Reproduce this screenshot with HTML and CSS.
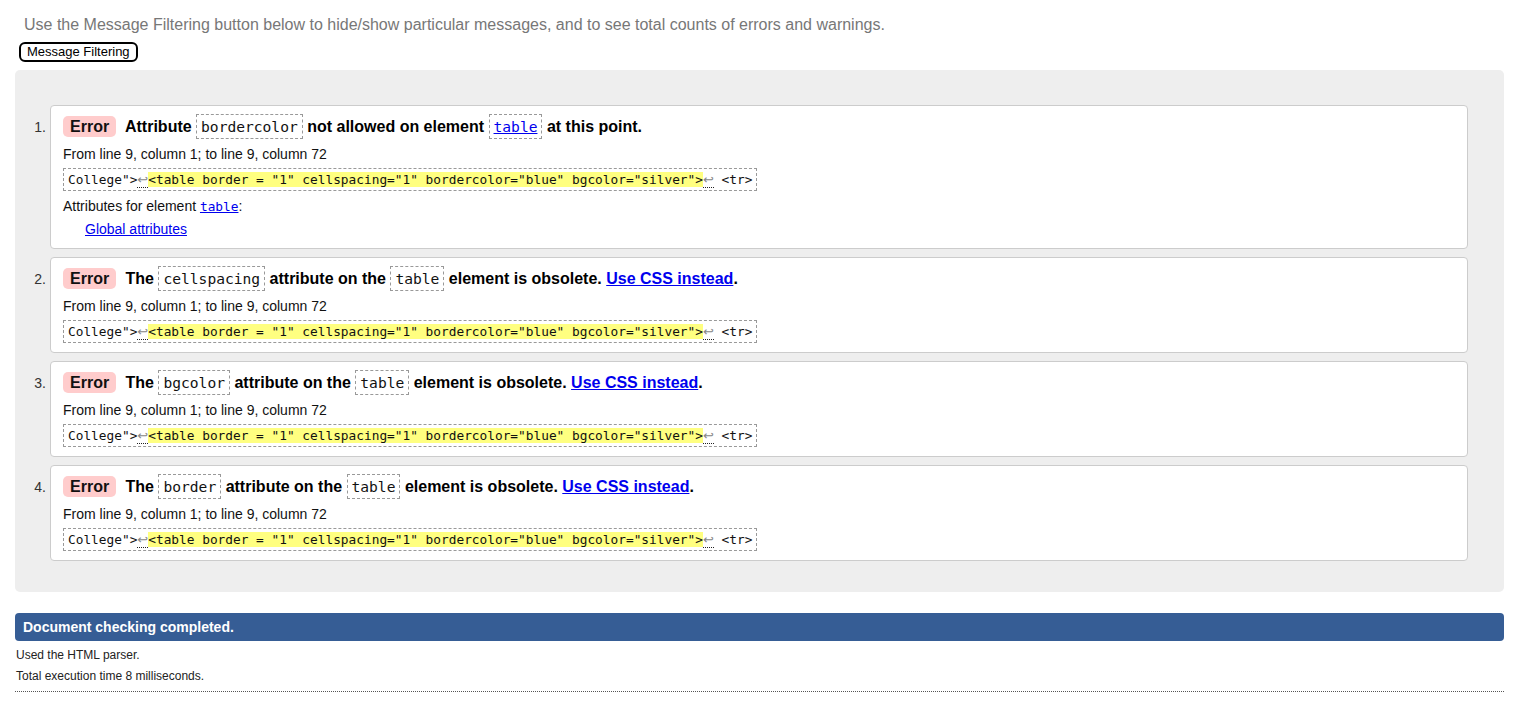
FILE: index.html
```html
<!DOCTYPE html>
<html lang="en">
<head>
<meta charset="utf-8">
<title>Nu Html Checker</title>
<link rel="stylesheet" href="styles.css">
</head>
<body>
<p class="intro">Use the Message Filtering button below to hide/show particular messages, and to see total counts of errors and warnings.</p>
<button class="filter-btn" type="button">Message Filtering</button>
<div class="results">
  <ol class="messages">
    <li class="item">
      <span class="num">1.</span>
      <div class="card">
        <p class="title"><strong class="badge">Error</strong> Attribute <code class="ic">bordercolor</code> not allowed on element <code class="ic"><a href="#">table</a></code> at this point.</p>
        <p class="loc">From line 9, column 1; to line 9, column 72</p>
        <div class="extract"><code>College"&gt;<span class="lf">↩</span><span class="hl">&lt;table border = "1" cellspacing="1" bordercolor="blue" bgcolor="silver"&gt;</span><span class="lf">↩</span> &lt;tr&gt;</code></div>
        <p class="attrs">Attributes for element <a class="mono" href="#">table</a>:</p>
        <p class="global"><a href="#">Global attributes</a></p>
      </div>
    </li>
    <li class="item">
      <span class="num">2.</span>
      <div class="card">
        <p class="title"><strong class="badge">Error</strong> The <code class="ic">cellspacing</code> attribute on the <code class="ic">table</code> element is obsolete. <a href="#">Use CSS instead</a>.</p>
        <p class="loc">From line 9, column 1; to line 9, column 72</p>
        <div class="extract"><code>College"&gt;<span class="lf">↩</span><span class="hl">&lt;table border = "1" cellspacing="1" bordercolor="blue" bgcolor="silver"&gt;</span><span class="lf">↩</span> &lt;tr&gt;</code></div>
      </div>
    </li>
    <li class="item">
      <span class="num">3.</span>
      <div class="card">
        <p class="title"><strong class="badge">Error</strong> The <code class="ic">bgcolor</code> attribute on the <code class="ic">table</code> element is obsolete. <a href="#">Use CSS instead</a>.</p>
        <p class="loc">From line 9, column 1; to line 9, column 72</p>
        <div class="extract"><code>College"&gt;<span class="lf">↩</span><span class="hl">&lt;table border = "1" cellspacing="1" bordercolor="blue" bgcolor="silver"&gt;</span><span class="lf">↩</span> &lt;tr&gt;</code></div>
      </div>
    </li>
    <li class="item">
      <span class="num">4.</span>
      <div class="card">
        <p class="title"><strong class="badge">Error</strong> The <code class="ic">border</code> attribute on the <code class="ic">table</code> element is obsolete. <a href="#">Use CSS instead</a>.</p>
        <p class="loc">From line 9, column 1; to line 9, column 72</p>
        <div class="extract"><code>College"&gt;<span class="lf">↩</span><span class="hl">&lt;table border = "1" cellspacing="1" bordercolor="blue" bgcolor="silver"&gt;</span><span class="lf">↩</span> &lt;tr&gt;</code></div>
      </div>
    </li>
  </ol>
</div>
<p class="done">Document checking completed.</p>
<p class="stat stat-first">Used the HTML parser.</p>
<p class="stat">Total execution time 8 milliseconds.</p>
<div class="rule"></div>
</body>
</html>
```
FILE: styles.css
```css
html, body {
  margin: 0;
  padding: 0;
  background: #fff;
}
body {
  padding: 0 27px 0 15px;
  font-family: "Liberation Sans", Arial, sans-serif;
  color: #222;
}
.intro {
  margin: 0;
  padding: 16px 0 0 9px;
  font-size: 16px;
  line-height: 18px;
  color: #777;
}
.filter-btn {
  display: block;
  margin: 8px 0 0 4px;
  padding: 0 6px;
  height: 20px;
  font-family: "Liberation Sans", Arial, sans-serif;
  font-size: 13px;
  line-height: 16px;
  color: #000;
  background: #fff;
  border: 2px solid #000;
  border-radius: 6px;
}
.results {
  margin-top: 8px;
  background: #eee;
  border-radius: 5px;
  padding: 35px 36px 31px 0;
}
.messages {
  list-style: none;
  margin: 0;
  padding: 0;
  display: flex;
  flex-direction: column;
  gap: 8px;
}
.item {
  display: flex;
  align-items: flex-start;
}
.num {
  flex: none;
  box-sizing: border-box;
  width: 35px;
  padding: 8px 4px 0 0;
  text-align: right;
  font-size: 14px;
  line-height: 28px;
  color: #333;
}
.card {
  flex: 1;
  background: #fff;
  border: 1px solid #ccc;
  border-radius: 4px;
  padding: 7px 12px 9px;
}
.card p {
  margin: 0;
}
.title {
  font-size: 16px;
  font-weight: bold;
  line-height: 28px;
  color: #000;
}
.badge {
  display: inline-block;
  padding: 2px 7px;
  margin-right: 5px;
  line-height: 17px;
  background: #fcc;
  border-radius: 5px;
  color: #111;
}
.ic {
  font-family: "DejaVu Sans Mono", Consolas, monospace;
  font-weight: normal;
  font-size: 14.6px;
  padding: 3px 4px;
  border: 1px dashed #999;
  color: #111;
}
a {
  color: #00e;
  text-decoration: underline;
}
.loc {
  margin-top: 3px !important;
  font-size: 14px;
  line-height: 20px;
  color: #111;
}
.extract {
  display: table;
  margin-top: 4px;
  padding: 2px 4px;
  border: 1px dashed #999;
  font-family: "DejaVu Sans Mono", Consolas, monospace;
  font-size: 12.8px;
  line-height: 17px;
  color: #111;
  white-space: pre;
}
.extract code {
  font-family: inherit;
  font-size: inherit;
}
.hl {
  background: #ffff80;
}
.lf {
  font-family: "DejaVu Sans", sans-serif;
  font-size: 13px;
  line-height: 17px;
  color: #888;
  border-bottom: 1px dotted #222;
}
.attrs {
  margin-top: 5px !important;
  font-size: 14px;
  line-height: 20px;
  color: #111;
}
.mono {
  font-family: "DejaVu Sans Mono", Consolas, monospace;
  font-size: 12.8px;
}
.global {
  margin-top: 2px !important;
  padding-left: 22px;
  font-size: 14px;
  line-height: 20px;
}
.done {
  margin: 21px 0 0;
  padding: 0 8px;
  height: 28px;
  line-height: 28px;
  background: #365d95;
  border-radius: 4px;
  color: #fff;
  font-size: 14px;
  font-weight: bold;
}
.stat {
  margin: 5px 0 0;
  padding-left: 1px;
  font-size: 12px;
  line-height: 16px;
  color: #222;
}
.stat-first {
  margin-top: 6px;
}
.rule {
  margin-top: 7px;
  border-top: 1px dotted #555;
}
```
